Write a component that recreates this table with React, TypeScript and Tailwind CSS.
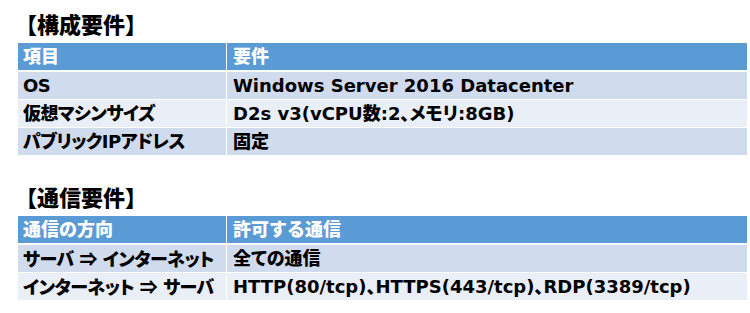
const config = [
  ['OS', 'Windows Server 2016 Datacenter'],
  ['仮想マシンサイズ', 'D2s v3(vCPU数:2、メモリ:8GB)'],
  ['パブリックIPアドレス', '固定'],
];

const traffic = [
  ['サーバ ⇒ インターネット', '全ての通信'],
  ['インターネット ⇒ サーバ', 'HTTP(80/tcp)、HTTPS(443/tcp)、RDP(3389/tcp)'],
];

// ⇒ is drawn from the CJK font so it keeps its full width
function Cell({ text }: { text: string }) {
  const parts = text.split('⇒');
  return (
    <span>
      {parts.map((p, i) => (
        <span key={i}>
          {i > 0 && <span className="[font-family:'Noto_Sans_CJK_JP',sans-serif] [font-feature-settings:normal]">⇒</span>}
          {p}
        </span>
      ))}
    </span>
  );
}

function Table({ head, rows }: { head: [string, string]; rows: string[][] }) {
  return (
    <div className="flex flex-col gap-[1px]">
      <div className="grid grid-cols-[208px_1fr] gap-[1px] h-[27px] mb-[1px]">
        {head.map((h, i) => (
          <div key={i} className={`bg-[#5b9bd5] text-white flex items-center ${i === 0 ? 'px-[5px]' : 'px-[6px]'}`}>
            {h}
          </div>
        ))}
      </div>
      {rows.map((row, r) => (
        <div key={r} className="grid grid-cols-[208px_1fr] gap-[1px] h-[27px]">
          {row.map((c, i) => (
            <div
              key={i}
              className={`flex items-center whitespace-nowrap text-black [font-feature-settings:'palt'] ${
                i === 0 ? 'px-[5px] tracking-[-0.5px]' : 'px-[6px]'
              } ${r % 2 === 0 ? 'bg-[#d0dcee]' : 'bg-[#e9eef7]'}`}
            >
              <Cell text={c} />
            </div>
          ))}
        </div>
      ))}
    </div>
  );
}

export default function App() {
  return (
    <div
      className="w-[750px] h-[313px] bg-white pl-[18px] pr-[3px] pt-[8px] font-black text-[18px] leading-none"
      style={{ fontFamily: '"DejaVu Sans", "Noto Sans CJK JP", sans-serif' }}
    >
      <h2 className="text-[22px] h-[35px] flex items-center -ml-[3px] text-black">【構成要件】</h2>
      <Table head={['項目', '要件']} rows={config} />
      <h2 className="text-[22px] h-[35px] flex items-center -ml-[3px] mt-[26px] text-black">【通信要件】</h2>
      <Table head={['通信の方向', '許可する通信']} rows={traffic} />
    </div>
  );
}
